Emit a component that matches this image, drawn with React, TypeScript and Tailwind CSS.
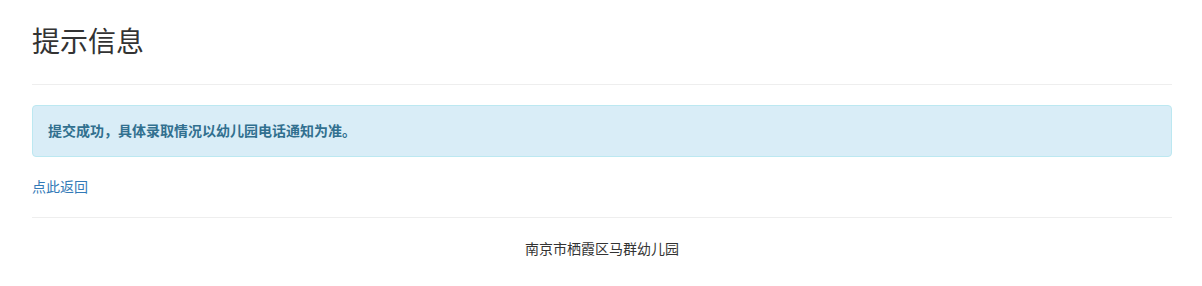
import React from "react";

const App = () => {
  return (
    <div
      className="min-h-screen bg-white text-[#333]"
      style={{ fontFamily: '"Liberation Sans", "Noto Sans CJK SC", sans-serif' }}
    >
      <div className="w-[1140px] ml-8">
        {/* PAGE HEADER */}
        <div className="pt-[27px] pb-[26px] border-b border-[#eee]">
          <h1 className="text-[28px] leading-[31px] font-normal">提示信息</h1>
        </div>

        {/* ALERT */}
        <div className="mt-5 bg-[#d9edf7] border border-[#bce8f1] rounded px-[15px] py-[15px] text-[#31708f] text-sm leading-5 font-bold">
          提交成功，具体录取情况以幼儿园电话通知为准。
        </div>

        {/* BACK LINK */}
        <div className="mt-5 text-sm leading-5">
          <a href="#" className="text-[#337ab7]">点此返回</a>
        </div>

        {/* FOOTER */}
        <div className="mt-5 border-t border-[#eee] pt-[21px] text-center text-sm leading-5">
          南京市栖霞区马群幼儿园
        </div>
      </div>
    </div>
  );
};

export default App;
